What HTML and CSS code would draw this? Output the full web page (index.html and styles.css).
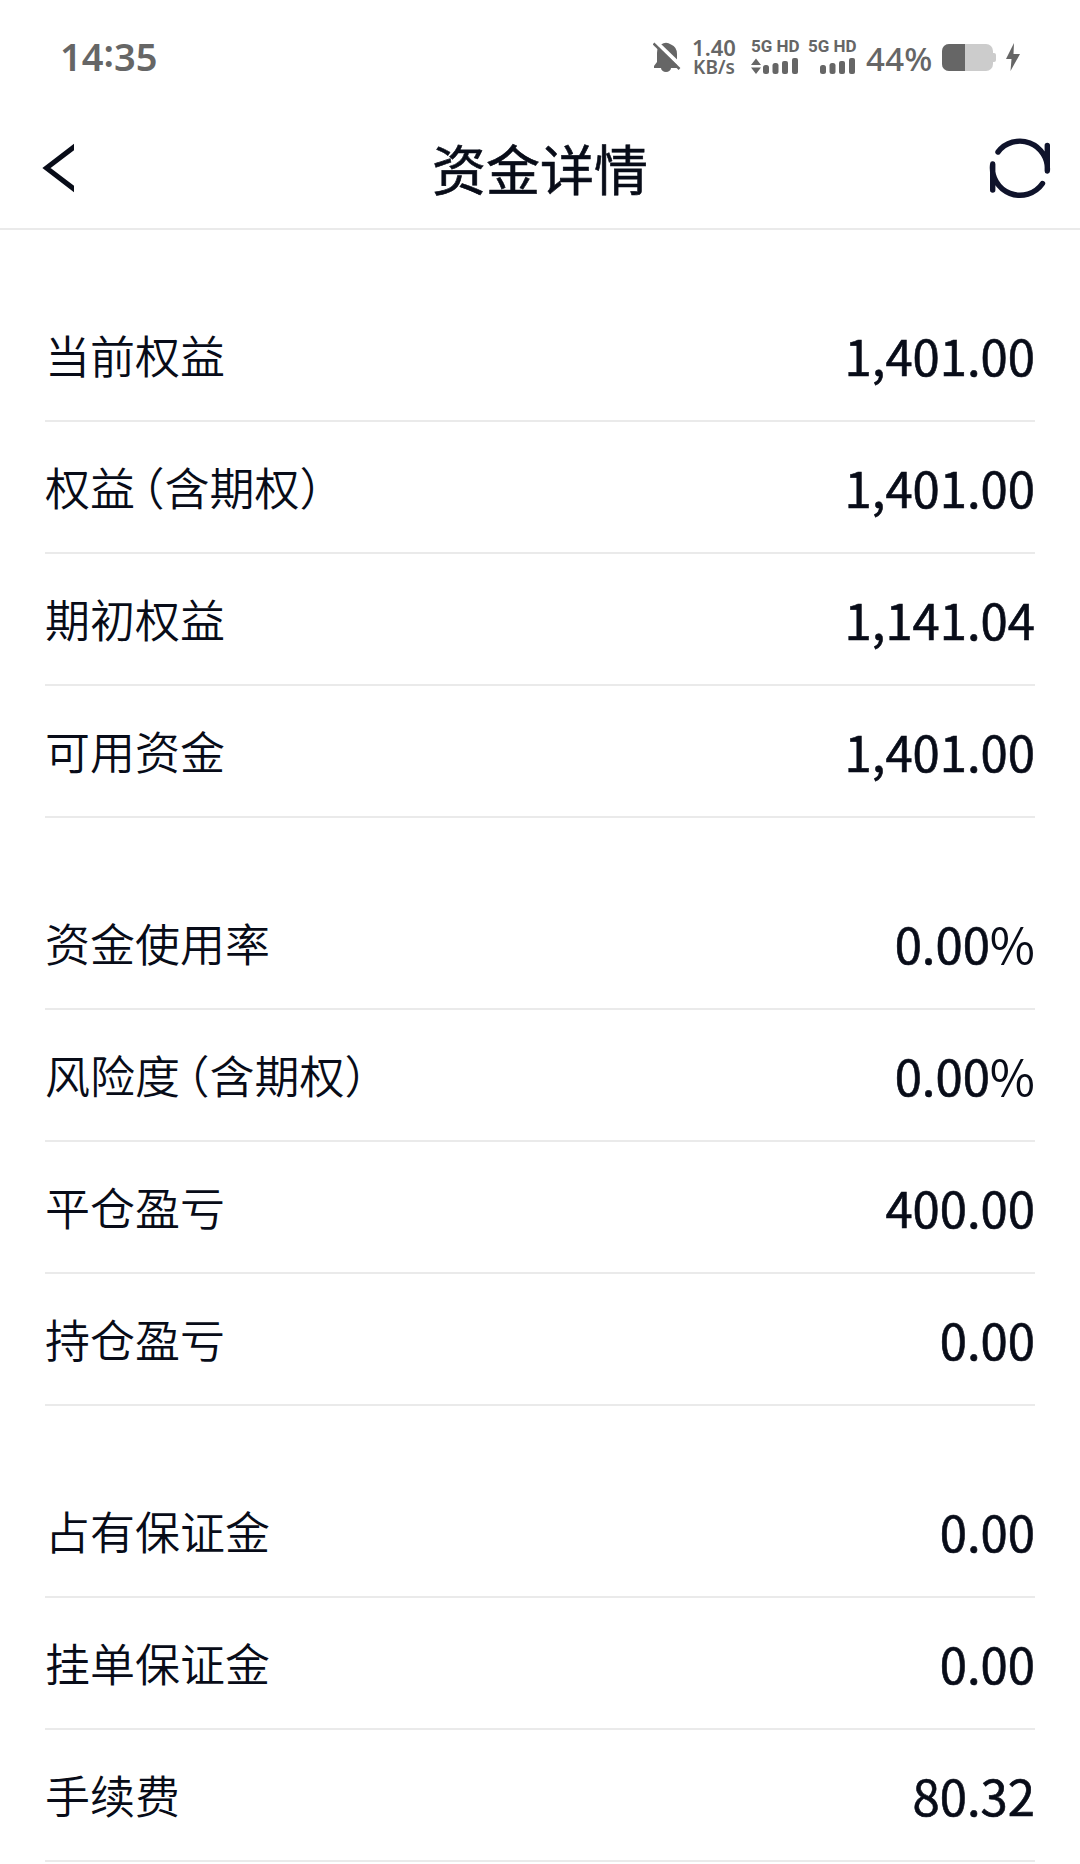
FILE: index.html
```
<!DOCTYPE html>
<html lang="zh-CN">
<head>
<meta charset="utf-8">
<title>资金详情</title>
<link rel="stylesheet" href="styles.css">
</head>
<body>

<div class="status">
   <span class="clock">14<span class="colon">:</span>35</span>
   <div class="tray">
      <svg class="mute" width="28" height="32" viewBox="0 0 28 32">
         <path d="M8 3.500Q13 0 18 3.500Q24 6 24 13v14H1v-2l3-4V12Q4 6 8 3.500zM8 27h10a5 4 0 0 1-10 0z" fill="#666"/>
         <path d="M1 -1l30 29" stroke="#fff" stroke-width="4"/>
         <path d="M0.500 2.500l26 25.500" stroke="#666" stroke-width="2.500"/>
      </svg>
      <div class="speed"><div class="num">1.40</div><div class="rate">KB/s</div></div>
      <div class="sim">
         <b>5G HD</b>
         <svg width="48" height="16" viewBox="0 0 48 16" fill="#666">
            <path d="M0 7l5-6.500L10 7zM0 9.500h10L5 16z"/>
            <rect x="12" y="7" width="6" height="9" rx="2.500"/>
            <rect x="21.500" y="5" width="6" height="11" rx="2.500"/>
            <rect x="31" y="3" width="6" height="13" rx="2"/>
            <rect x="41" y="0" width="6" height="16" rx="2"/>
         </svg>
      </div>
      <div class="sim second">
         <b>5G HD</b>
         <svg width="48" height="16" viewBox="0 0 48 16" fill="#666">
            <rect x="12" y="7" width="6" height="9" rx="2.500"/>
            <rect x="21.500" y="5" width="6" height="11" rx="2.500"/>
            <rect x="31" y="3" width="6" height="13" rx="2"/>
            <rect x="41" y="0" width="6" height="16" rx="2"/>
         </svg>
      </div>
      <span class="percent">44%</span>
      <svg class="battery" width="54" height="27" viewBox="0 0 54 27">
         <rect width="51" height="27" rx="7" fill="#ccc"/>
         <rect x="48" y="9" width="6" height="9" rx="2" fill="#ccc"/>
         <path d="M7 0h16v27H7a7 7 0 0 1-7-7V7a7 7 0 0 1 7-7z" fill="#666"/>
      </svg>
      <svg class="bolt" width="14" height="28" viewBox="0 0 14 28"><path d="M8 0L0 16h5.500l-1 12L14 11H7.500z" fill="#666"/></svg>
   </div>
</div>

<div class="titlebar">
   <svg class="back" width="32" height="50" viewBox="0 0 32 50"><path d="M37 0.200L4.500 25L37 49.800" fill="none" stroke="#080c18" stroke-width="5"/></svg>
   <h1>资金详情</h1>
   <svg class="refresh" width="64" height="64" viewBox="0 0 64 64">
      <path d="M10 16A27.500 27.500 0 0 1 59.300 35V9.500M54.500 47.500A27.500 27.500 0 0 1 4.700 28V54" fill="none" stroke="#0f132b" stroke-width="5.400" stroke-linecap="round" stroke-linejoin="round"/>
   </svg>
</div>

<div class="group">
   <div class="row"><span class="name">当前权益</span><span class="value">1,401.00</span></div>
   <div class="row"><span class="name">权益<span class="paren">（</span>含期权）</span><span class="value">1,401.00</span></div>
   <div class="row"><span class="name">期初权益</span><span class="value">1,141.04</span></div>
   <div class="row"><span class="name">可用资金</span><span class="value">1,401.00</span></div>
</div>

<div class="group">
   <div class="row"><span class="name">资金使用率</span><span class="value">0.00<span class="unit">%</span></span></div>
   <div class="row"><span class="name">风险度<span class="paren">（</span>含期权）</span><span class="value">0.00<span class="unit">%</span></span></div>
   <div class="row"><span class="name">平仓盈亏</span><span class="value">400.00</span></div>
   <div class="row"><span class="name">持仓盈亏</span><span class="value">0.00</span></div>
</div>

<div class="group">
   <div class="row"><span class="name">占有保证金</span><span class="value">0.00</span></div>
   <div class="row"><span class="name">挂单保证金</span><span class="value">0.00</span></div>
   <div class="row"><span class="name">手续费</span><span class="value">80.32</span></div>
</div>

</body>
</html>
```
FILE: styles.css
```
/* page */
   html, body  {margin: 0px; padding: 0px; background-color: white}
   body        {width: 1080px; height: 1864px; overflow: hidden; color: #080c18;
                font-family: "Noto Sans CJK SC", "Noto Sans", sans-serif}
   svg         {display: block}

/* phone status bar */
   .status     {display: flex; justify-content: space-between; height: 114px;
                padding: 0px 60px; box-sizing: border-box; align-items: center;
                color: #666; font-family: "Noto Sans", sans-serif}
   .clock      {font-size: 38px; font-weight: 580; line-height: 50px; padding-bottom: 2px}
   .colon      {display: inline-block; line-height: 40px; padding-bottom: 4px; vertical-align: 4px}
   .tray       {display: flex; align-items: center}
   .speed      {width: 48px; text-align: center; margin-left: 9px; margin-right: 1px; white-space: nowrap}
   .speed .num {font-size: 22px; line-height: 19px; font-weight: 650}
   .speed .rate {font-size: 19px; line-height: 20px; font-weight: 600}
   .sim        {width: 48px; margin-left: 12px; margin-right: 1px; white-space: nowrap}
   .sim b      {display: block; font: bold 17px/12px Roboto, sans-serif; margin-bottom: 6px}
   .sim.second {margin-left: 8px}
   .percent    {width: 68px; font-size: 33px; line-height: 40px; font-weight: 520;
                letter-spacing: 0.3px; margin: 4px 8px 0px 9px}
   .bolt       {margin-left: 10px}

/* title bar */
   .titlebar   {display: grid; grid-template-columns: 1fr auto 1fr; align-items: center;
                height: 116px; padding: 0px 28px 6px 42px; box-sizing: border-box;
                border-bottom: 2px solid #eaeaea}
   .titlebar h1 {margin: 0px 14px 0px 0px; font-size: 54px; font-weight: 400; line-height: 80px;
                 -webkit-text-stroke: 0.6px #080c18}
   .refresh    {justify-self: end}

/* figures */
   .group      {margin: 60px 45px 0px}
   .row        {display: flex; justify-content: space-between; align-items: center;
                height: 132px; box-sizing: border-box; border-bottom: 2px solid #eaeaea}
   .name       {font-size: 45px; line-height: 66px; font-weight: 350}
   .paren      {font-feature-settings: "halt"; margin-left: 7px}
   .value      {font-size: 49px; line-height: 66px; font-weight: 400;
                -webkit-text-stroke: 0.6px #080c18}
   .value .unit {-webkit-text-stroke: 0px}
```
